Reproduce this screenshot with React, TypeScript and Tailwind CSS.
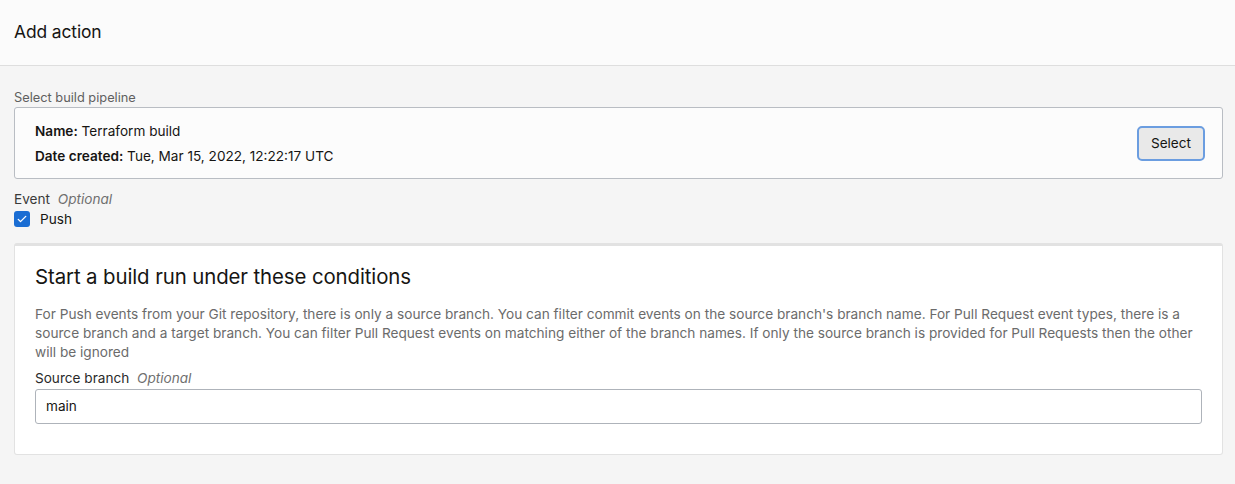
export default function App() {
  return (
    <main
      className="min-h-[484px] w-full bg-[#f5f5f5] text-[#161513]"
      style={{ fontFamily: "Inter, 'Liberation Sans', sans-serif" }}
    >
      {/* Header */}
      <header className="flex h-[66px] items-center border-b border-[#dedede] bg-[#fbfbfb] px-[14px]">
        <h1 className="text-[17.4px] font-normal tracking-[-0.1px]">Add action</h1>
      </header>

      <div className="pl-[14px] pr-[12px] pt-[24px]">
        {/* Pipeline */}
        <div className="text-[12.8px] leading-[16px] text-[#5f5f5f]">Select build pipeline</div>
        <div className="mt-[1px] flex h-[72px] items-center justify-between rounded-[3px] border border-[#b9bdc3] bg-[#fcfcfc] pl-[20px] pr-[17px]">
          <div className="mt-[2px] space-y-[8px] text-[13.6px] leading-[17px]">
            <div>
              <span className="font-semibold">Name:</span> Terraform build
            </div>
            <div>
              <span className="font-semibold">Date created:</span> Tue, Mar 15, 2022, 12:22:17 UTC
            </div>
          </div>
          <button className="h-[35px] rounded-[5px] border-2 border-[#6b9de0] bg-[#e9e9e9] px-[12px] text-[13.6px] text-[#161513]">
            Select
          </button>
        </div>

        {/* Event */}
        <div className="mt-[12px] text-[13.6px] leading-[16px] text-[#3a3a3a]">
          Event <span className="ml-[4px] italic text-[#6f6f6f]">Optional</span>
        </div>
        <label className="mt-[4px] flex items-center gap-[10px] text-[13.6px] leading-[16px]">
          <span className="flex h-[16px] w-[16px] items-center justify-center rounded-[3px] bg-[#1a6dd3]">
            <svg viewBox="0 0 16 16" className="h-[12px] w-[12px]" fill="none" stroke="white" strokeWidth="1.8" strokeLinecap="round" strokeLinejoin="round">
              <path d="M3 8.5l3 3 7-7" />
            </svg>
          </span>
          Push
        </label>

        {/* Conditions */}
        <section className="mt-[16px] rounded-[3px] border border-t-[3px] border-[#e2e2e2] bg-white px-[20px] pb-[30px] pt-[18px]">
          <h2 className="text-[20.4px] leading-[26px] font-normal tracking-[-0.1px]">
            Start a build run under these conditions
          </h2>
          <p className="mt-[15px] text-[13.65px] leading-[19px] text-[#6b6b6b]">
            For Push events from your Git repository, there is only a source branch. You can filter commit events on the source branch's branch name. For Pull Request event types, there is a source branch and a target branch. You can filter Pull Request events on matching either of the branch names. If only the source branch is provided for Pull Requests then the other will be ignored
          </p>
          <div className="mt-[8px] text-[13.6px] leading-[16px] text-[#2a2a2a]">
            Source branch <span className="ml-[4px] italic text-[#6f6f6f]">Optional</span>
          </div>
          <div className="mt-[3px] flex h-[35px] items-center rounded-[3px] border border-[#aeb3ba] bg-white px-[10px] text-[13.6px]">
            main
          </div>
        </section>
      </div>
    </main>
  );
}
